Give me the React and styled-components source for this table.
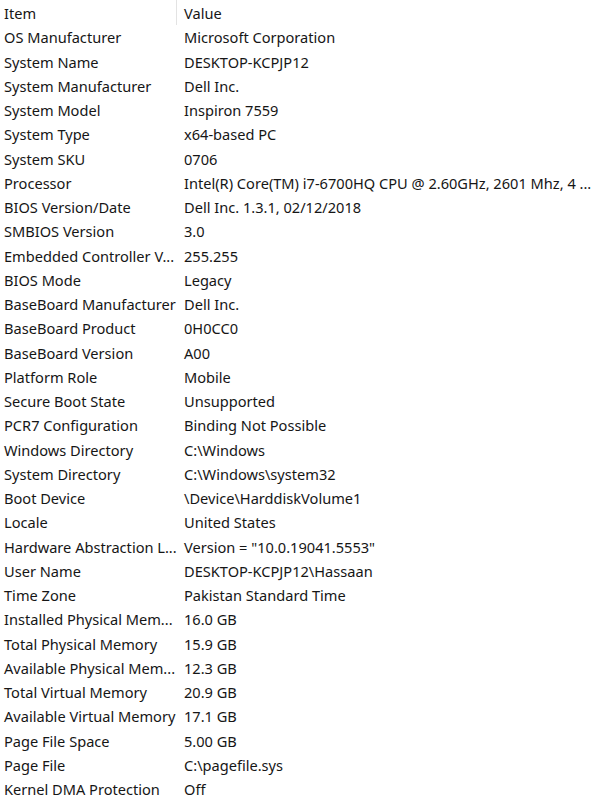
import React from 'react';
import styled, { createGlobalStyle } from 'styled-components';

const rows = [
  ['OS Manufacturer', 'Microsoft Corporation'],
  ['System Name', 'DESKTOP-KCPJP12'],
  ['System Manufacturer', 'Dell Inc.'],
  ['System Model', 'Inspiron 7559'],
  ['System Type', 'x64-based PC'],
  ['System SKU', '0706'],
  ['Processor', 'Intel(R) Core(TM) i7-6700HQ CPU @ 2.60GHz, 2601 Mhz, 4 ...'],
  ['BIOS Version/Date', 'Dell Inc. 1.3.1, 02/12/2018'],
  ['SMBIOS Version', '3.0'],
  ['Embedded Controller V...', '255.255'],
  ['BIOS Mode', 'Legacy'],
  ['BaseBoard Manufacturer', 'Dell Inc.'],
  ['BaseBoard Product', '0H0CC0'],
  ['BaseBoard Version', 'A00'],
  ['Platform Role', 'Mobile'],
  ['Secure Boot State', 'Unsupported'],
  ['PCR7 Configuration', 'Binding Not Possible'],
  ['Windows Directory', 'C:\\Windows'],
  ['System Directory', 'C:\\Windows\\system32'],
  ['Boot Device', '\\Device\\HarddiskVolume1'],
  ['Locale', 'United States'],
  ['Hardware Abstraction L...', 'Version = "10.0.19041.5553"'],
  ['User Name', 'DESKTOP-KCPJP12\\Hassaan'],
  ['Time Zone', 'Pakistan Standard Time'],
  ['Installed Physical Mem...', '16.0 GB'],
  ['Total Physical Memory', '15.9 GB'],
  ['Available Physical Mem...', '12.3 GB'],
  ['Total Virtual Memory', '20.9 GB'],
  ['Available Virtual Memory', '17.1 GB'],
  ['Page File Space', '5.00 GB'],
  ['Page File', 'C:\\pagefile.sys'],
  ['Kernel DMA Protection', 'Off'],
];

export default function App() {
  return (
    <>
      <GlobalStyle />
      <List>
        <Header>
          <Cell>Item</Cell>
          <HeadValue>Value</HeadValue>
        </Header>
        {rows.map(([item, value]) => (
          <Row key={item}>
            <Cell>{item}</Cell>
            <Value>{value}</Value>
          </Row>
        ))}
      </List>
    </>
  );
}

const GlobalStyle = createGlobalStyle`
  body {
    margin: 0;
    background: #ffffff;
  }
`;

const List = styled.div`
  width: 597px;
  height: 800px;
  overflow: hidden;
  background: #ffffff;
  font-family: "Noto Sans", "Open Sans", sans-serif;
  font-size: 14.6px;
  color: #161616;
  padding-top: 1px;
  box-sizing: border-box;
`;

const Row = styled.div`
  display: grid;
  grid-template-columns: 180px 1fr;
  height: 24.25px;
  align-items: center;
  white-space: nowrap;
`;

const Header = styled(Row)``;

const Cell = styled.div`
  padding-left: 4px;
  overflow: hidden;
`;

const Value = styled.div`
  padding-left: 4px;
`;

const HeadValue = styled(Value)`
  position: relative;
  height: 100%;
  display: flex;
  align-items: center;

  &::before {
    content: "";
    position: absolute;
    left: -4px;
    top: -1px;
    bottom: 0;
    width: 1px;
    background: #e3e3e3;
  }
`;
